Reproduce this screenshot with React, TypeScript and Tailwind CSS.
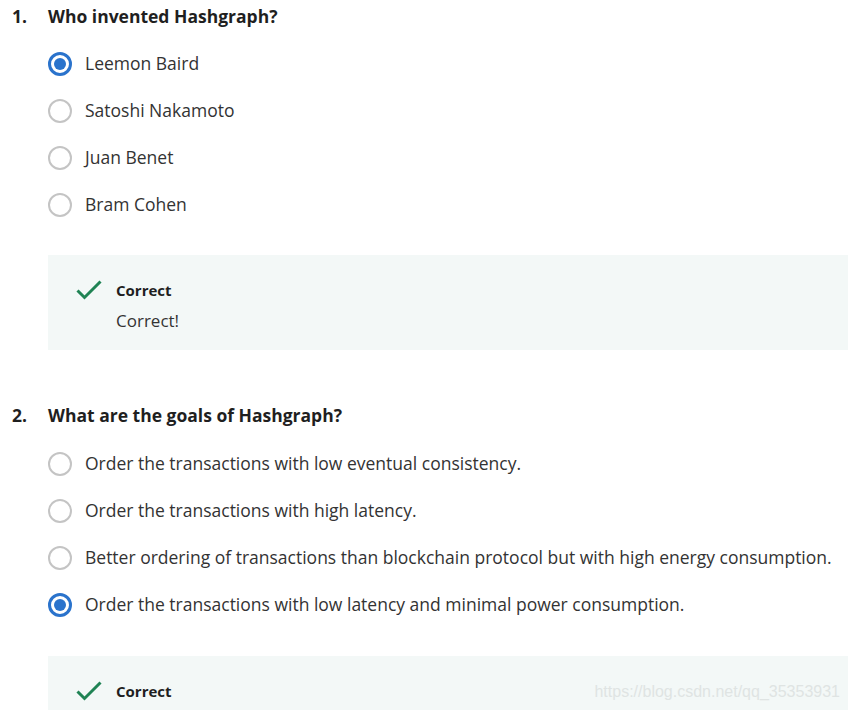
import React from 'react'

type Question = {
  num: string
  title: string
  options: string[]
  selected: number
  feedback?: string
}

const questions: Question[] = [
  {
    num: '1.',
    title: 'Who invented Hashgraph?',
    options: ['Leemon Baird', 'Satoshi Nakamoto', 'Juan Benet', 'Bram Cohen'],
    selected: 0,
    feedback: 'Correct!',
  },
  {
    num: '2.',
    title: 'What are the goals of Hashgraph?',
    options: [
      'Order the transactions with low eventual consistency.',
      'Order the transactions with high latency.',
      'Better ordering of transactions than blockchain protocol but with high energy consumption.',
      'Order the transactions with low latency and minimal power consumption.',
    ],
    selected: 3,
  },
]

function Radio({ checked }: { checked: boolean }) {
  if (checked) {
    return (
      <span className="flex h-[24px] w-[24px] shrink-0 items-center justify-center rounded-full border-[3px] border-[#2a73cc]">
        <span className="h-[12px] w-[12px] rounded-full bg-[#2a73cc]" />
      </span>
    )
  }
  return <span className="h-[24px] w-[24px] shrink-0 rounded-full border-[2px] border-[#c4c4c4]" />
}

function CheckIcon() {
  return (
    <svg className="h-[20px] w-[26px] shrink-0" viewBox="0 0 26 20" fill="none">
      <path d="M1.5 10.5l7 7L24.5 1.5" stroke="#1f8354" strokeWidth={3} />
    </svg>
  )
}

function QuestionBlock({ q, first }: { q: Question; first: boolean }) {
  return (
    <div className={first ? '' : 'mt-[49px]'}>
      <div className="flex h-[32px] items-center text-[17.5px] font-bold text-[#1f1f1f]">
        <span className="w-[36px]">{q.num}</span>
        <span>{q.title}</span>
      </div>
      <ul className={`ml-[36px] ${first ? 'mt-[8px]' : 'mt-[9px]'}`}>
        {q.options.map((opt, i) => (
          <li key={opt} className="flex h-[47px] items-center gap-[13px] text-[17.5px] text-[#333]">
            <Radio checked={i === q.selected} />
            <span className="whitespace-nowrap">{opt}</span>
          </li>
        ))}
      </ul>
      <div
        className={`relative ml-[36px] bg-[#f3f8f7] pl-[28px] pt-[25px] ${
          first ? 'mt-[27px] pb-[17px]' : 'mt-[28px] h-[54px]'
        }`}
      >
        <div className="flex items-center gap-[14px]">
          <CheckIcon />
          <span className="text-[15px] font-bold leading-[20px] text-[#1f1f1f]">Correct</span>
        </div>
        {q.feedback && (
          <p className="ml-[40px] mt-[9px] text-[17px] leading-[24px] text-[#333]">{q.feedback}</p>
        )}
        {!first && (
          <span className="absolute right-[8px] top-[24px] font-['Liberation_Sans',Arial,sans-serif] text-[16px] text-[#dfe4e3]">
            https://blog.csdn.net/qq_35353931
          </span>
        )}
      </div>
    </div>
  )
}

export default function App() {
  return (
    <div className="h-[710px] w-[848px] overflow-hidden bg-white pl-[12px] font-['Open_Sans',sans-serif]">
      {questions.map((q, i) => (
        <QuestionBlock key={q.num} q={q} first={i === 0} />
      ))}
    </div>
  )
}
